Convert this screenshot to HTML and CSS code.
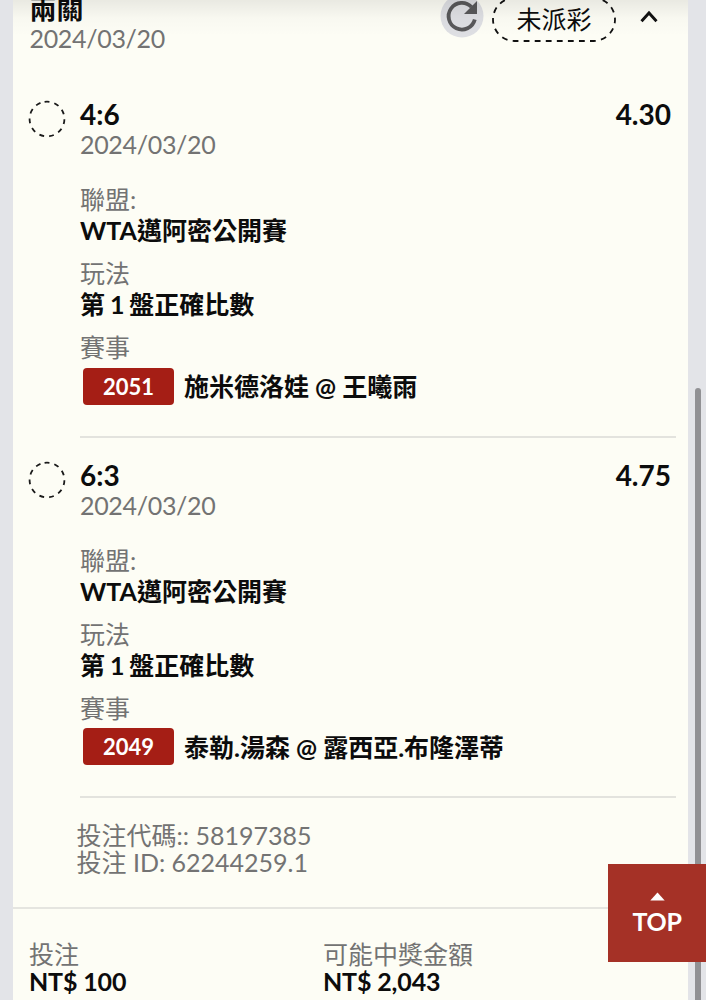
FILE: index.html
```html
<!DOCTYPE html>
<html lang="zh-Hant">
<head>
  <meta charset="UTF-8">
  <title>投注紀錄</title>
  <link rel="stylesheet" href="styles.css">
</head>
<body>
  <main class="card">
    <header class="card-header">
      <div class="heading">
        <h1>兩關</h1>
        <p class="date">2024/03/20</p>
      </div>
      <div class="actions">
        <button class="refresh">
          <svg width="44" height="44" viewBox="0 0 44 44">
            <circle cx="22" cy="22" r="21.5" fill="#dedfe3"/>
            <path d="M34.8 25.500A13.300 13.300 0 1 1 31.500 13" fill="none" stroke="#58585a" stroke-width="3.800"/>
            <path d="M37 7v13H24z" fill="#58585a"/>
          </svg>
        </button>
        <span class="pill">
          <svg class="pill-border" width="124" height="45" viewBox="0 0 124 45">
            <rect x="1" y="1" width="122" height="43" rx="21.5" fill="none" stroke="#111" stroke-width="1.8" stroke-dasharray="5.8 5.26"/>
          </svg>
          未派彩
        </span>
        <svg class="chevron" width="18" height="13" viewBox="0 0 18 13">
          <path d="M1.5 11.2 9 3l7.5 8.2" fill="none" stroke="#111" stroke-width="2.9"/>
        </svg>
      </div>
    </header>

    <section class="bet">
      <svg class="status" width="38" height="38" viewBox="0 0 38 38">
        <circle cx="19" cy="19" r="17.4"/>
      </svg>
      <div class="bet-body">
        <div class="score"><span>4:6</span><span>4.30</span></div>
        <p class="date">2024/03/20</p>
        <dl>
          <dt>聯盟:</dt>
          <dd>WTA邁阿密公開賽</dd>
          <dt>玩法</dt>
          <dd class="play">第 1 盤正確比數</dd>
          <dt>賽事</dt>
          <dd class="match"><span class="badge">2051</span>施米德洛娃 @ 王曦雨</dd>
        </dl>
      </div>
    </section>

    <section class="bet">
      <svg class="status" width="38" height="38" viewBox="0 0 38 38">
        <circle cx="19" cy="19" r="17.4"/>
      </svg>
      <div class="bet-body">
        <div class="score"><span>6:3</span><span>4.75</span></div>
        <p class="date">2024/03/20</p>
        <dl>
          <dt>聯盟:</dt>
          <dd>WTA邁阿密公開賽</dd>
          <dt>玩法</dt>
          <dd class="play">第 1 盤正確比數</dd>
          <dt>賽事</dt>
          <dd class="match"><span class="badge">2049</span>泰勒.湯森 @ 露西亞.布隆澤蒂</dd>
        </dl>
      </div>
    </section>

    <div class="codes">
      <p>投注代碼:: 58197385</p>
      <p>投注 ID: 62244259.1</p>
    </div>

    <footer class="totals">
      <div>
        <p class="label">投注</p>
        <p class="amount">NT$ 100</p>
      </div>
      <div>
        <p class="label">可能中獎金額</p>
        <p class="amount">NT$ 2,043</p>
      </div>
    </footer>
  </main>

  <div class="top-shade"></div>
  <div class="scrollbar"></div>
  <a class="to-top" href="#">
    <svg width="15" height="9" viewBox="0 0 15 9"><path d="M.3 8.5 7.5.5l7.200 8z" fill="#fff"/></svg>
    TOP
  </a>
</body>
</html>
```

FILE: styles.css
```css
* {
  box-sizing: border-box;
}
body {
  margin: 0;
  height: 1000px;
  overflow: hidden;
  background: #e3e4e8;
  font-family: Lato, "Noto Sans CJK TC", sans-serif;
  font-size: 25px;
  color: #0c0c0c;
}
h1, p, dl, dd {
  margin: 0;
}
.card {
  display: flow-root;
  width: 675px;
  height: 1000px;
  margin-left: 13px;
  background: #fdfdf5;
}
.card-header {
  display: flex;
  justify-content: space-between;
  margin-top: -6px;
  padding: 0 30px 0 16.5px;
  height: 105px;
}
h1 {
  font-size: 27px;
  font-weight: 700;
  line-height: 29px;
}
.date {
  color: #737373;
  letter-spacing: -.32px;
  line-height: 30px;
}
.actions {
  display: flex;
  align-items: center;
  height: 50px;
}
.refresh {
  display: flex;
  margin: -7px 8px 0 0;
  padding: 0;
  border: 0;
  background: none;
}
.pill {
  position: relative;
  width: 124px;
  height: 45px;
  line-height: 45px;
  text-align: center;
}
.pill-border {
  position: absolute;
  top: 0;
  left: 0;
}
.chevron {
  margin: -6px 0 0 24px;
}
.bet {
  display: flex;
  height: 360.5px;
  padding: 0 12px 0 15px;
}
.status {
  flex: none;
  margin: 1px 14px 0 0;
}
.status circle {
  fill: none;
  stroke: #1a1a1a;
  stroke-width: 1.8;
  stroke-dasharray: 4.9 5.04;
  transform: rotate(-98deg);
  transform-origin: center;
}
.bet-body {
  flex: 1;
  height: 338.5px;
  border-bottom: 2px solid #e3e3de;
}
.score {
  display: flex;
  justify-content: space-between;
  padding-right: 5px;
  font-size: 28px;
  font-weight: 700;
  line-height: 30px;
}
dl {
  margin-top: 25px;
}
dt, .label {
  color: #737373;
  line-height: 30px;
}
dd {
  margin-bottom: 12px;
  font-weight: 700;
  line-height: 32px;
}
.play {
  word-spacing: -1.2px;
}
.match {
  display: flex;
  align-items: center;
  height: 48px;
  padding-left: 3px;
}
.badge {
  width: 91px;
  height: 37px;
  margin-right: 10px;
  border-radius: 4px;
  background: #a51e15;
  color: #fff;
  font-size: 22px;
  line-height: 37px;
  text-align: center;
}
.codes {
  height: 89px;
  padding: 2px 0 0 63.5px;
  border-bottom: 2px solid #e5e5e0;
  color: #737373;
  line-height: 27px;
}
.totals {
  display: grid;
  grid-template-columns: 294px 1fr;
  padding: 30px 0 0 16px;
}
.amount {
  font-weight: 700;
  letter-spacing: -.15px;
  line-height: 25px;
}
.top-shade {
  position: absolute;
  top: 0;
  left: 13px;
  width: 675px;
  height: 36px;
  background: linear-gradient(rgba(0, 0, 0, .08), rgba(0, 0, 0, .02) 50%, rgba(0, 0, 0, 0));
}
.scrollbar {
  position: absolute;
  top: 388px;
  left: 695px;
  width: 6px;
  height: 640px;
  border-radius: 3px;
  background: #919194;
}
.to-top {
  position: absolute;
  top: 864px;
  left: 608px;
  display: flex;
  flex-direction: column;
  align-items: center;
  width: 98px;
  height: 98px;
  padding-top: 28px;
  background: #a53126;
  color: #fff;
  font-weight: 700;
  letter-spacing: -.3px;
  line-height: 40px;
  text-decoration: none;
}
```
